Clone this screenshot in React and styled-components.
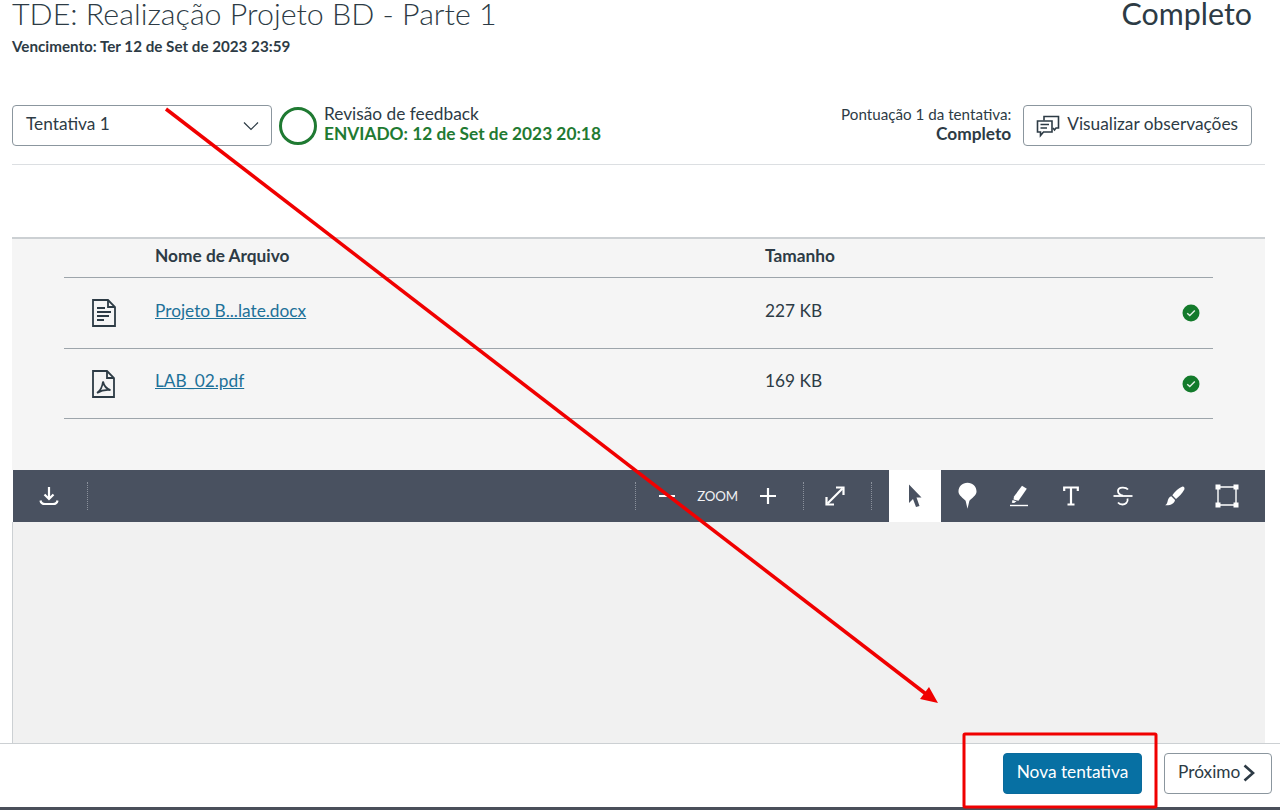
import React from 'react';
import styled, { createGlobalStyle } from 'styled-components';

const GlobalStyle = createGlobalStyle`
    html, body {
        margin: 0;
        padding: 0;
        background: #fff;
        font-family: Lato, "Open Sans", "Liberation Sans", sans-serif;
        color: #2d3b45;
    }
`

const Page = styled.div`
    position: relative;
    width: 1280px;
    height: 810px;
    overflow: hidden;
    display: flex;
    flex-direction: column;
`

const Content = styled.div`
    flex: 1;
    min-height: 0;
    padding-left: 12px;
    padding-right: 15px;
    display: flex;
    flex-direction: column;
`

const TitleRow = styled.div`
    display: flex;
    justify-content: space-between;
    align-items: flex-start;
    height: 37px;
    padding-right: 13px;
`

const Title = styled.h1`
    margin: 0;
    font-size: 30.4px;
    line-height: 27px;
    font-weight: 300;
    color: #2d3b45;
`

const Status = styled.div`
    font-size: 30.4px;
    line-height: 27px;
    color: #2d3b45;
`

const DueDate = styled.div`
    font-size: 15.2px;
    line-height: 18px;
    font-weight: 700;
`

const AttemptRow = styled.div`
    display: flex;
    align-items: center;
    height: 41px;
    margin-top: 50px;
    padding-right: 13px;
`

const AttemptSelect = styled.div`
    box-sizing: border-box;
    width: 260px;
    height: 41px;
    border: 1px solid #8b969e;
    border-radius: 4px;
    padding: 0 12px 4px 13px;
    display: flex;
    align-items: center;
    justify-content: space-between;
    font-size: 17.3px;

    & > svg {
        margin-top: 4px;
    }
`

const StatusRing = styled.div`
    box-sizing: border-box;
    width: 38px;
    height: 38px;
    margin-left: 7px;
    border: 3.5px solid #1f7a32;
    border-radius: 50%;
`

const Feedback = styled.div`
    margin-left: 7px;
    padding-bottom: 4px;
    font-size: 17.3px;
    line-height: 20px;
`

const Submitted = styled.div`
    font-weight: 700;
    color: #1f7a32;
`

const ScoreBlock = styled.div`
    margin-left: auto;
    margin-right: 12px;
    padding-bottom: 4px;
    text-align: right;
    font-size: 15.2px;
    line-height: 20px;
`

const ScoreValue = styled.div`
    font-size: 17.3px;
    font-weight: 700;
`

const OutlineButton = styled.button`
    box-sizing: border-box;
    height: 41px;
    border: 1px solid #8b969e;
    border-radius: 4px;
    background: #fff;
    color: #2d3b45;
    font-family: inherit;
    font-size: 17.3px;
    display: inline-flex;
    align-items: center;
    gap: ${(p) => p.$gap || 7}px;
    padding: 0 13px 0 12px;
`

const ButtonText = styled.span`
    padding-bottom: 4px;
`

const Divider = styled.div`
    height: 1px;
    margin-top: 18px;
    background: #dcdfe2;
`

const FilesPanel = styled.section`
    margin-top: 72px;
    height: 233px;
    box-sizing: border-box;
    border-top: 2px solid #ccd0d3;
    background: #f5f5f5;
    padding: 0 52px;
`

const FileRow = styled.div`
    display: grid;
    grid-template-columns: 91px 610px 1fr 31px;
    align-items: center;
    box-sizing: border-box;
    height: ${(p) => p.$height}px;
    border-bottom: 1px solid #9da5ab;
    font-size: 17.3px;
`

const TextCell = styled.div`
    padding-bottom: 6px;
`

const HeadCell = styled(TextCell)`
    font-weight: 700;
`

const IconCell = styled.div`
    display: flex;
    justify-content: center;
    padding-right: 12px;
`

const FileLink = styled.a`
    color: #1d7199;
    text-decoration: underline;
`

const CheckCell = styled.div`
    display: flex;
`

const Toolbar = styled.div`
    height: 52px;
    flex-shrink: 0;
    margin-left: 1px;
    background: #495160;
    display: flex;
    align-items: stretch;
    padding-right: 12px;
    color: #fff;
`

const ToolSlot = styled.div`
    width: ${(p) => p.$width || 52}px;
    display: flex;
    align-items: center;
    justify-content: center;
    flex-shrink: 0;
    background: ${(p) => (p.$active ? '#fff' : 'transparent')};
    color: ${(p) => (p.$active ? '#495160' : '#fff')};
`

const ToolSep = styled.div`
    width: 0;
    align-self: center;
    height: 28px;
    border-left: 1px dotted #8b919c;
    margin-left: ${(p) => p.$left || 0}px;
`

const ZoomLabel = styled.span`
    font-size: 13.3px;
    letter-spacing: -0.2px;
    color: #f1f2f4;
`

const Spacer = styled.div`
    flex: 1;
`

const Viewer = styled.div`
    flex: 1;
    background: #f1f1f1;
    border-left: 1px solid #ccd0d3;
`

const Footer = styled.footer`
    height: 67px;
    flex-shrink: 0;
    box-sizing: border-box;
    background: #fff;
    border-top: 1px solid #ccd0d3;
    border-bottom: 3px solid #4a4f5a;
    padding: 9px 8px 0 0;
    display: flex;
    justify-content: flex-end;
    align-items: flex-start;
    gap: 22px;
`

const PrimaryButton = styled.button`
    box-sizing: border-box;
    width: 139px;
    height: 41px;
    border: 1px solid #0a6a9c;
    border-radius: 4px;
    padding: 0 0 4px;
    background: #0770a3;
    color: #fff;
    font-family: inherit;
    font-size: 17.3px;
`

const NextButton = styled(OutlineButton)`
    width: 108px;
    padding: 0 13px;
    justify-content: flex-start;

    & > svg {
        margin-bottom: 2px;
    }
`

const Annotation = styled.svg`
    position: absolute;
    left: 0;
    top: 0;
    pointer-events: none;
`

const SelectChevron = () => (
    <svg width="16" height="16" viewBox="0 0 16 16" fill="none" stroke="#2d3b45" strokeWidth="1.2">
        <path d="M1 4.5 8 11.5 15 4.5" />
    </svg>
)

const CommentsIcon = () => (
    <svg width="24" height="24" viewBox="0 0 24 24" fill="none" stroke="#2d3b45" strokeWidth="1.6">
        <path d="M8 6.5V2.5H22.5V14H20L18.5 16 17 14" />
        <path d="M1.5 7H16V18H7.5L4.5 21.5V18H1.5Z" />
        <path d="M4.5 10.5H13M4.5 14H11" />
    </svg>
)

const DocIcon = () => (
    <svg width="24" height="28" viewBox="0 0 24 28" fill="none" stroke="#2d3b45" strokeWidth="1.8">
        <path d="M1 1H16L23 8V27H1Z" />
        <path d="M16 1V8H23" />
        <path d="M5 9H13M5 13H19M5 17H17M5 21H12" />
    </svg>
)

const PdfIcon = () => (
    <svg width="23" height="28" viewBox="0 0 23 28" fill="none" stroke="#2d3b45" strokeWidth="1.8">
        <path d="M1 1H15L22 8V27H1Z" />
        <path d="M15 1V8H22" />
        <path d="M5 23C8 21 10.5 16 11 11.5 12 16 14.5 19 18.5 20 14 19.5 9 20.5 5 23Z" />
    </svg>
)

const CheckBadge = () => (
    <svg width="18" height="18" viewBox="0 0 18 18">
        <circle cx="9" cy="9" r="8.5" fill="#137a2b" />
        <path d="M5.2 9.2 7.8 11.6 12.8 6.6" fill="none" stroke="#e4f1e6" strokeWidth="1.4" />
    </svg>
)

const DownloadIcon = () => (
    <svg width="20" height="20" viewBox="0 0 20 20" fill="none" stroke="#fff" strokeWidth="2.2">
        <path d="M10 1V13M5.5 8.5 10 13 14.5 8.5" />
        <path d="M1.5 14.5C2 17.5 4 18 6 18H14C16 18 18 17.5 18.5 14.5" />
    </svg>
)

const MinusIcon = () => (
    <svg width="18" height="18" viewBox="0 0 18 18" stroke="#fff" strokeWidth="2">
        <path d="M1 9H17" />
    </svg>
)

const PlusIcon = () => (
    <svg width="18" height="18" viewBox="0 0 18 18" stroke="#fff" strokeWidth="2.2">
        <path d="M1 9H17M9 1V17" />
    </svg>
)

const ExpandIcon = () => (
    <svg width="20" height="20" viewBox="0 0 20 20" fill="none" stroke="#fff" strokeWidth="2.2">
        <path d="M2.5 17.5 17.5 2.5" />
        <path d="M11 1.5H18.5V9M1.5 11V18.5H9" />
    </svg>
)

const CursorIcon = () => (
    <svg width="14" height="24" viewBox="0 0 14 24" fill="currentColor">
        <path d="M1 0.5 13.5 13.5H8.5L11.5 22 8 23 5 15 1 19Z" />
    </svg>
)

const PinIcon = () => (
    <svg width="19" height="28" viewBox="0 0 20 28" fill="#fff">
        <path d="M10 0C15.5 0 19.5 4 19.5 9.2 19.5 13.5 14.5 16 12 19L10 27.5 8 19C5.5 16 .5 13.5 .5 9.2.5 4 4.5 0 10 0Z" />
    </svg>
)

const HighlightIcon = () => (
    <svg width="20" height="22" viewBox="0 0 20 22">
        <path d="M13 .8 17.8 3.8 9.5 15.8 4.5 14.5 5 11.5Z" fill="#fff" />
        <path d="M3.5 15 7.5 16.2 5.2 18 2.8 17.8Z" fill="#fff" />
        <path d="M1 20.5H19" stroke="#fff" strokeWidth="1.4" />
    </svg>
)

const TextIcon = () => (
    <svg width="16" height="20" viewBox="0 0 16 20" fill="none" stroke="#fff" strokeWidth="2.2">
        <path d="M1.2 5V1.5H14.8V5M8 1.5V18.5M4.5 18.5H11.5" />
    </svg>
)

const StrikeIcon = () => (
    <svg width="20" height="20" viewBox="0 0 20 20" fill="none" stroke="#fff" strokeWidth="1.8">
        <path d="M15 3.5C13 1 5 .5 5 5 5 7.5 7 9 10 9.6" />
        <path d="M0.5 10H19.5" />
        <path d="M14.5 12.5C15.5 16.5 12 18.5 9.5 18.5 7.5 18.5 6 17.8 5 16.5" />
    </svg>
)

const BrushIcon = () => (
    <svg width="20" height="20" viewBox="0 0 20 20" fill="#fff">
        <path d="M17.5 .5C19.3 .7 20 2.2 19.2 3.8 17 7.5 14 10.8 11 13L7.3 9.3C10 5.5 13.5 2 17.5 .5Z" />
        <path d="M6.3 10.3 10 14C9.8 17.2 5.5 19.8 .2 19.3 2.2 18 2.2 16.5 2.8 14.5 3.4 12.2 4.5 10.8 6.3 10.3Z" />
    </svg>
)

const BoxIcon = () => (
    <svg width="24" height="24" viewBox="0 0 24 24" fill="#fff">
        <path d="M3 3H21V21H3Z" fill="none" stroke="#fff" strokeWidth="1.4" />
        <rect x="0.5" y="0.5" width="5" height="5" />
        <rect x="18.5" y="0.5" width="5" height="5" />
        <rect x="0.5" y="18.5" width="5" height="5" />
        <rect x="18.5" y="18.5" width="5" height="5" />
    </svg>
)

const NextChevron = () => (
    <svg width="12" height="18" viewBox="0 0 12 18" fill="none" stroke="#2d3b45" strokeWidth="2.6">
        <path d="M1.5 1.5 10 9 1.5 16.5" />
    </svg>
)

const files = [
    { name: 'Projeto B...late.docx', size: '227 KB', icon: <DocIcon />, height: 71 },
    { name: 'LAB_02.pdf', size: '169 KB', icon: <PdfIcon />, height: 70 },
];

const tools = [
    <PinIcon />,
    <HighlightIcon />,
    <TextIcon />,
    <StrikeIcon />,
    <BrushIcon />,
    <BoxIcon />,
];

export default function App() {
    return (
        <Page>
            <GlobalStyle />
            <Content>
                <TitleRow>
                    <Title>TDE: Realização Projeto BD - Parte 1</Title>
                    <Status>Completo</Status>
                </TitleRow>
                <DueDate>Vencimento: Ter 12 de Set de 2023 23:59</DueDate>

                <AttemptRow>
                    <AttemptSelect>
                        Tentativa 1
                        <SelectChevron />
                    </AttemptSelect>
                    <StatusRing />
                    <Feedback>
                        Revisão de feedback
                        <Submitted>ENVIADO: 12 de Set de 2023 20:18</Submitted>
                    </Feedback>
                    <ScoreBlock>
                        Pontuação 1 da tentativa:
                        <ScoreValue>Completo</ScoreValue>
                    </ScoreBlock>
                    <OutlineButton>
                        <CommentsIcon />
                        <ButtonText>Visualizar observações</ButtonText>
                    </OutlineButton>
                </AttemptRow>
                <Divider />

                <FilesPanel>
                    <FileRow $height={39}>
                        <span />
                        <HeadCell>Nome de Arquivo</HeadCell>
                        <HeadCell>Tamanho</HeadCell>
                    </FileRow>
                    {files.map((file) => (
                        <FileRow key={file.name} $height={file.height}>
                            <IconCell>{file.icon}</IconCell>
                            <TextCell><FileLink href="#">{file.name}</FileLink></TextCell>
                            <TextCell>{file.size}</TextCell>
                            <CheckCell><CheckBadge /></CheckCell>
                        </FileRow>
                    ))}
                </FilesPanel>

                <Toolbar>
                    <ToolSlot $width={72}><DownloadIcon /></ToolSlot>
                    <ToolSep $left={2} />
                    <Spacer />
                    <ToolSep />
                    <ToolSlot $width={61}><MinusIcon /></ToolSlot>
                    <ToolSlot $width={41}><ZoomLabel>ZOOM</ZoomLabel></ToolSlot>
                    <ToolSlot $width={59}><PlusIcon /></ToolSlot>
                    <ToolSlot $width={6} />
                    <ToolSep />
                    <ToolSlot $width={62}><ExpandIcon /></ToolSlot>
                    <ToolSlot $width={5} />
                    <ToolSep />
                    <ToolSlot $width={17} />
                    <ToolSlot $active><CursorIcon /></ToolSlot>
                    {tools.map((icon, i) => (
                        <ToolSlot key={i}>{icon}</ToolSlot>
                    ))}
                </Toolbar>
                <Viewer />
            </Content>

            <Footer>
                <PrimaryButton>Nova tentativa</PrimaryButton>
                <NextButton $gap={3}>
                    <ButtonText>Próximo</ButtonText>
                    <NextChevron />
                </NextButton>
            </Footer>

            <Annotation width="1280" height="810" viewBox="0 0 1280 810">
                <path d="M166 109 926 694" stroke="#f00000" strokeWidth="3.5" fill="none" />
                <path d="M938 703 920 699 929 687Z" fill="#f00000" />
                <rect x="964" y="734" width="192" height="73" rx="1" fill="none" stroke="#f00000" strokeWidth="3" />
            </Annotation>
        </Page>
    );
}
